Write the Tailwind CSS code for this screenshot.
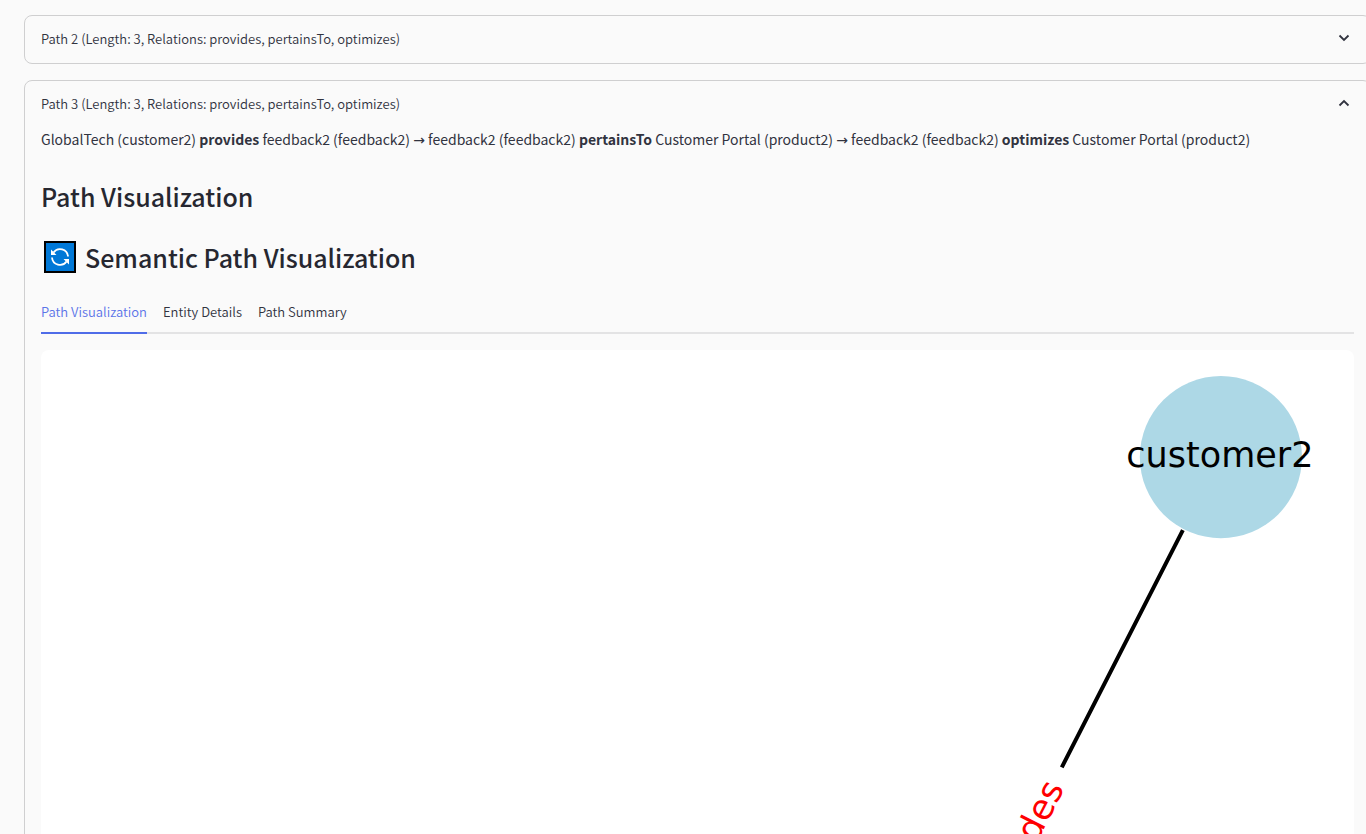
<!DOCTYPE html>
<html lang="en">
<head>
<meta charset="utf-8">
<meta name="viewport" content="width=device-width, initial-scale=1">
<title>Path Visualization</title>
<script src="https://cdn.jsdelivr.net/npm/@tailwindcss/browser@4"></script>
</head>
<body class="h-screen overflow-hidden bg-[#fafafa] font-['Noto_Sans_CJK_SC','Noto_Sans',sans-serif] text-[#31333f]">
<main class="ml-6 -mr-[5px] flex flex-col gap-4 pt-[15px]">
  <section class="rounded-lg border border-[#cfcfd0]">
    <button type="button" aria-expanded="false" class="flex h-[47px] w-full items-center justify-between pb-0.5 pl-4 pr-[18px] text-left text-[13px] font-[350] leading-5">
      <span>Path 2 (Length: 3, Relations: provides, pertainsTo, optimizes)</span>
      <svg class="size-4" viewBox="0 0 16 16" fill="none" stroke="currentColor" stroke-width="1.800" aria-hidden="true"><path d="M3.500 4.500 8 9l4.500-4.500"/></svg>
    </button>
  </section>

  <section class="rounded-lg border border-[#cfcfd0]">
    <button type="button" aria-expanded="true" class="flex h-[47px] w-full items-center justify-between pb-0.5 pl-4 pr-[18px] text-left text-[13px] font-[350] leading-5">
      <span>Path 3 (Length: 3, Relations: provides, pertainsTo, optimizes)</span>
      <svg class="size-4" viewBox="0 0 16 16" fill="none" stroke="currentColor" stroke-width="1.800" aria-hidden="true"><path d="M3.500 9.500 8 5l4.500 4.500"/></svg>
    </button>
    <div class="px-4 pb-4">
      <p class="whitespace-nowrap text-[14px] leading-[22px]">GlobalTech (customer2) <strong>provides</strong> feedback2 (feedback2) <span class="font-['DejaVu_Sans'] text-[14px]">→</span> feedback2 (feedback2) <strong>pertainsTo</strong> Customer Portal (product2) <span class="font-['DejaVu_Sans'] text-[14px]">→</span> feedback2 (feedback2) <strong>optimizes</strong> Customer Portal (product2)</p>
      <h2 class="mt-[27px] text-[25px] font-medium leading-9 text-[#262730]">Path Visualization</h2>
      <h2 class="mt-[25px] flex items-center gap-[9px] pl-[3px] text-[25px] font-medium leading-9 text-[#262730]">
        <svg class="size-8" viewBox="0 0 32 32" fill="none" aria-hidden="true">
          <rect x="1" y="1" width="30" height="30" fill="#0078d7" stroke="#000" stroke-width="2"/>
          <path d="M9.500 11.500A8 8 0 0 1 24 15.500M22.500 20.500A8 8 0 0 1 8 16.500" stroke="#fff" stroke-width="1.800"/>
          <path d="M7 8.500v5.500h5.500zM25 23.500v-5.500h-5.500z" fill="#fff"/>
        </svg>
        <span>Semantic Path Visualization</span>
      </h2>
      <div role="tablist" class="mt-[17px] flex h-[42px] gap-4 border-b-2 border-[#e3e3e4] text-[13px] font-[350] leading-5">
        <button type="button" role="tab" aria-selected="true" class="-mb-0.5 h-[42px] border-b-2 border-[#4f6ce8] text-[#5b74e8]">Path Visualization</button>
        <button type="button" role="tab" aria-selected="false" class="h-10">Entity Details</button>
        <button type="button" role="tab" aria-selected="false" class="h-10">Path Summary</button>
      </div>
      <svg class="mt-4 w-full rounded-lg bg-white" viewBox="0 0 1312 984" role="img" aria-label="Path graph">
        <path d="M1141 180 1020 417M859 734 740 967" stroke="#000" stroke-width="4"/>
        <circle cx="1179" cy="107" r="81" fill="#add8e6"/>
        <text x="1178" y="117" text-anchor="middle" font-family="DejaVu Sans" font-size="35">customer2</text>
        <text transform="translate(1023 438) rotate(-63)" text-anchor="end" font-family="DejaVu Sans" font-size="35" fill="#f00">provides</text>
      </svg>
    </div>
  </section>
</main>
</body>
</html>
